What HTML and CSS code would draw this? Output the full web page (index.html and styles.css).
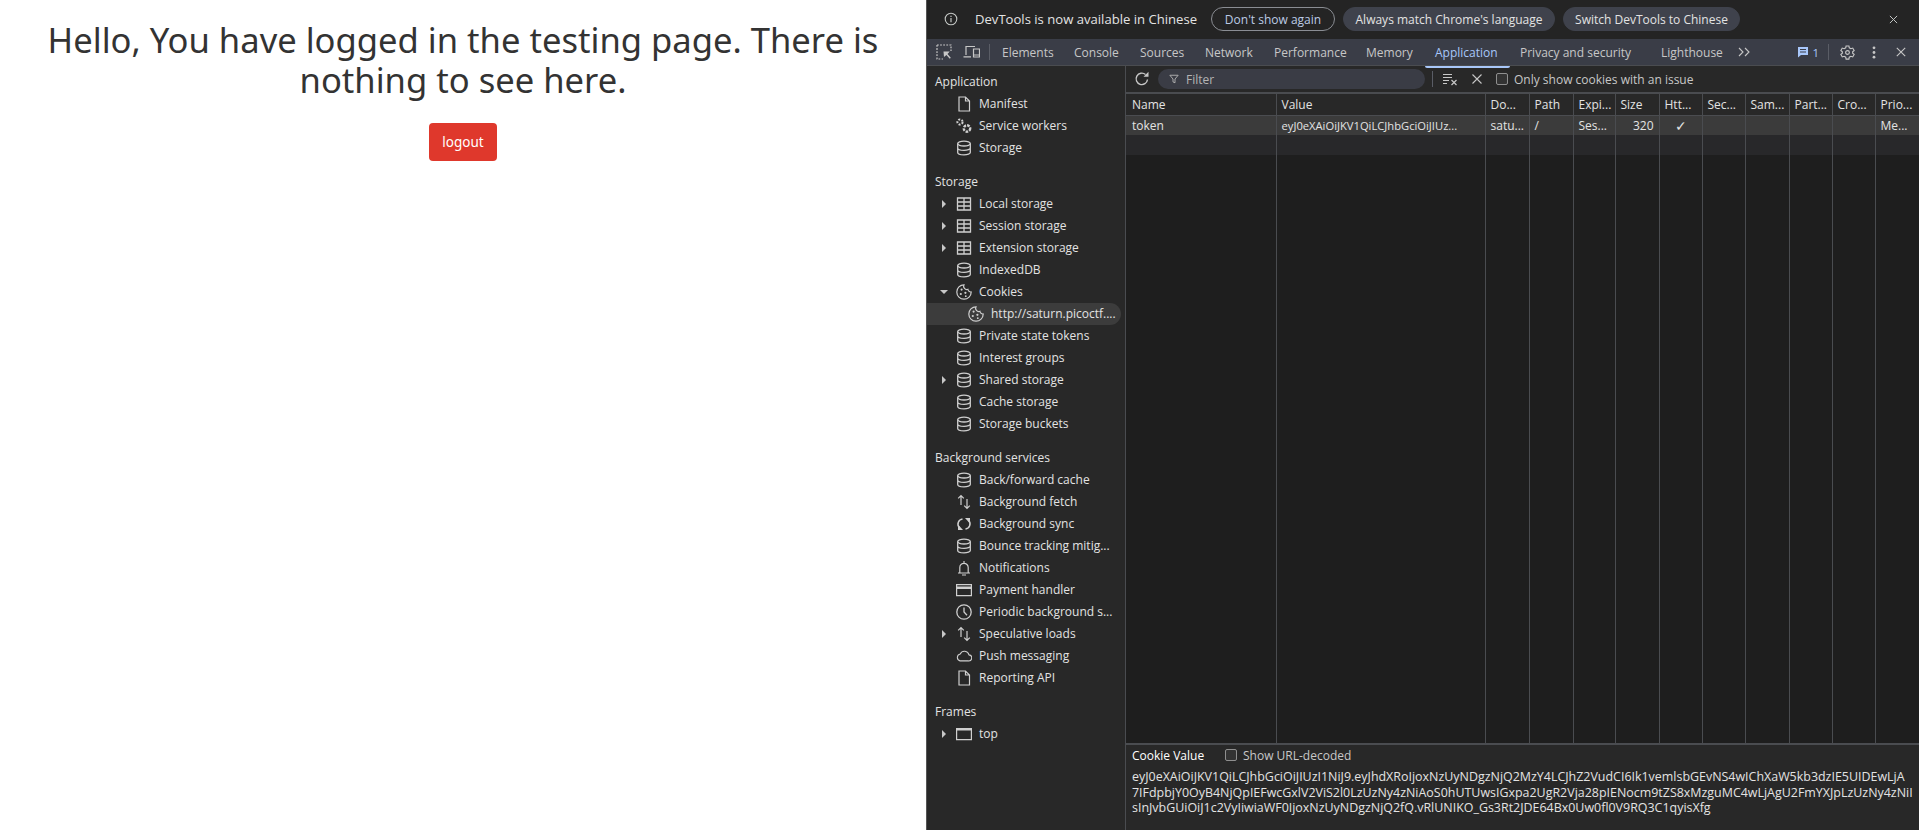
FILE: index.html
```html
<!DOCTYPE html>
<html lang="en">
<head>
    <meta charset="UTF-8">
    <meta name="viewport" content="width=device-width, initial-scale=1.0">
    <title>Testing page</title>
    <link rel="stylesheet" href="styles.css">
</head>
<body>
    <!-- icon sprite -->
    <svg class="sprite" xmlns="http://www.w3.org/2000/svg">
        <symbol id="i-file" viewBox="0 0 16 16"><path d="M3 1h6.500L13.500 5v10H3zM9.500 1v4h4" fill="none" stroke="currentColor" stroke-width="1.200"/></symbol>
        <symbol id="i-gears" viewBox="0 0 16 16"><circle cx="4" cy="4" r="2.600" fill="none" stroke="currentColor" stroke-width="2" stroke-dasharray="2 1.400"/><circle cx="11" cy="10.500" r="3.200" fill="none" stroke="currentColor" stroke-width="2.400" stroke-dasharray="2.600 1.100"/></symbol>
        <symbol id="i-db" viewBox="0 0 16 16"><g fill="none" stroke="currentColor" stroke-width="1.300"><ellipse cx="8" cy="3.600" rx="6.300" ry="2.400"/><path d="M1.700 3.600v8.800c0 1.300 2.800 2.400 6.300 2.400s6.300-1.100 6.300-2.400V3.600M1.700 8c0 1.300 2.800 2.400 6.300 2.400s6.300-1.100 6.300-2.400"/></g></symbol>
        <symbol id="i-table" viewBox="0 0 16 16"><path d="M1.500 2h13v12h-13zM1.500 6h13M1.500 10h13M8 2v12" fill="none" stroke="currentColor" stroke-width="1.300"/></symbol>
        <symbol id="i-cookie" viewBox="0 0 16 16"><path d="M8 .8a7.200 7.200 0 1 0 7.200 7.200 3 3 0 0 1-3.300-2.700A3.200 3.200 0 0 1 8 .8z" fill="none" stroke="currentColor" stroke-width="1.200"/><circle cx="5.600" cy="5.600" r="1.100" fill="currentColor"/><circle cx="4.800" cy="10" r="1.100" fill="currentColor"/><circle cx="9.400" cy="8.800" r="1.100" fill="currentColor"/><circle cx="9.800" cy="12.200" r=".9" fill="currentColor"/></symbol>
        <symbol id="i-updown" viewBox="0 0 16 16"><path d="M5 11V1.500M2.200 4.300 5 1.500l2.800 2.800M11 5v9.500M8.200 11.700l2.800 2.800 2.800-2.800" fill="none" stroke="currentColor" stroke-width="1.200"/></symbol>
        <symbol id="i-sync" viewBox="0 0 16 16"><path d="M3.200 11.500A5.200 5.200 0 0 1 6.500 3M12.800 4.500A5.200 5.200 0 0 1 9.500 13" fill="none" stroke="currentColor" stroke-width="1.500"/><path d="M2 8.500v5.500h5zM14 7.500V2H9z" fill="currentColor"/></symbol>
        <symbol id="i-bell" viewBox="0 0 16 16"><path d="M2 13h12M3.800 13V7.500a4.200 4.200 0 0 1 8.400 0V13M8 1v2.300M6 15h4" fill="none" stroke="currentColor" stroke-width="1.200"/></symbol>
        <symbol id="i-card" viewBox="0 0 16 16"><path d="M.6 2.600h14.800v11H.6z" fill="none" stroke="currentColor" stroke-width="1.200"/><path d="M.6 4.500h14.800v2.500H.6z" fill="currentColor"/></symbol>
        <symbol id="i-clock" viewBox="0 0 16 16"><circle cx="8" cy="8" r="7.200" fill="none" stroke="currentColor" stroke-width="1.300"/><path d="M8 3.500V8l3 3.200" fill="none" stroke="currentColor" stroke-width="1.300"/></symbol>
        <symbol id="i-cloud" viewBox="0 0 18 16"><path d="M4.500 13.500H14a3.400 3.400 0 0 0 .6-6.800 5.200 5.200 0 0 0-9.800-1A4 4 0 0 0 4.500 13.500z" fill="none" stroke="currentColor" stroke-width="1.200"/></symbol>
        <symbol id="i-frame" viewBox="0 0 16 16"><path d="M.6 2.600h14.800v11H.6z" fill="none" stroke="currentColor" stroke-width="1.200"/><path d="M.6 2.600h14.800v1.900H.6z" fill="currentColor"/></symbol>
    </svg>

    <div class="layout">
        <main class="page">
            <h1>Hello, You have logged in the testing page. There is nothing to see here.</h1>
            <a class="btn-logout">logout</a>
        </main>

        <section class="devtools">
            <div class="infobar">
                <svg class="info-icon" viewBox="0 0 16 16"><circle cx="8" cy="8" r="5.800" fill="none" stroke="currentColor" stroke-width="1.100"/><path d="M7.400 7h1.200v4.200H7.400zM7.400 4.700h1.200v1.200H7.400z" fill="currentColor"/></svg>
                <span class="info-text">DevTools is now available in Chinese</span>
                <button class="pill pill-outline">Don't show again</button>
                <button class="pill">Always match Chrome's language</button>
                <button class="pill">Switch DevTools to Chinese</button>
                <svg class="info-close" viewBox="0 0 10 10"><path d="M1 1l8 8M9 1L1 9" stroke="currentColor" stroke-width="1.100"/></svg>
            </div>

            <div class="tabbar">
                <svg class="tool-icon" viewBox="0 0 16 16"><path d="M1 1h14v6M1 1v14h6" fill="none" stroke="currentColor" stroke-width="1.200" stroke-dasharray="1.800 1.300"/><path d="M7.500 7.500h6.200L11.500 10l3.300 3.800-1 1-3.400-3.700-2.400 2z" fill="currentColor"/></svg>
                <svg class="tool-icon device" viewBox="0 0 17 16"><path d="M3 11V2.500h9M.5 12.800h7.500M10.500 5h6v8h-6zM10.500 11h6" fill="none" stroke="currentColor" stroke-width="1.200"/></svg>
                <span class="tool-sep"></span>
                <nav class="tabs">
                    <span class="tab">Elements</span>
                    <span class="tab">Console</span>
                    <span class="tab">Sources</span>
                    <span class="tab">Network</span>
                    <span class="tab">Performance</span>
                    <span class="tab">Memory</span>
                    <span class="tab tab-active">Application</span>
                    <span class="tab">Privacy and security</span>
                    <span class="tab">Lighthouse</span>
                </nav>
                <svg class="more-icon" viewBox="0 0 12 10"><path d="M1 1l4 4-4 4M7 1l4 4-4 4" fill="none" stroke="currentColor" stroke-width="1.100"/></svg>
                <div class="tab-actions">
                    <span class="msg-count">
                        <svg viewBox="0 0 12 12"><path d="M1 1h10v8H4l-3 2.500z" fill="currentColor"/><path d="M3 3.500h6M3 6h6" stroke="#3a3d48" stroke-width="1"/></svg>
                        1
                    </span>
                    <span class="tool-sep"></span>
                    <svg class="action-icon" viewBox="0 0 16 16"><path d="M6.500 1h3l.4 2 1.700 1 2-.7 1.500 2.600-1.600 1.300v1.600l1.600 1.300-1.500 2.600-2-.7-1.700 1-.4 2h-3l-.4-2-1.700-1-2 .7L.9 10.100l1.600-1.300V7.200L.9 5.900l1.500-2.600 2 .7 1.700-1z" fill="none" stroke="currentColor" stroke-width="1.200"/><circle cx="8" cy="8" r="2" fill="none" stroke="currentColor" stroke-width="1.200"/></svg>
                    <svg class="action-icon dots" viewBox="0 0 4 14"><circle cx="2" cy="2" r="1.500" fill="currentColor"/><circle cx="2" cy="7" r="1.500" fill="currentColor"/><circle cx="2" cy="12" r="1.500" fill="currentColor"/></svg>
                    <svg class="action-icon cross" viewBox="0 0 10 10"><path d="M.8.8l8.400 8.400M9.200.8L.8 9.200" stroke="currentColor" stroke-width="1.100"/></svg>
                </div>
            </div>

            <div class="panel">
                <aside class="sidebar">
                    <div class="side-head">Application</div>
                    <div class="side-row"><svg class="side-icon"><use href="#i-file"/></svg>Manifest</div>
                    <div class="side-row"><svg class="side-icon"><use href="#i-gears"/></svg>Service workers</div>
                    <div class="side-row"><svg class="side-icon"><use href="#i-db"/></svg>Storage</div>

                    <div class="side-head side-gap">Storage</div>
                    <div class="side-row arrow"><svg class="side-icon"><use href="#i-table"/></svg>Local storage</div>
                    <div class="side-row arrow"><svg class="side-icon"><use href="#i-table"/></svg>Session storage</div>
                    <div class="side-row arrow"><svg class="side-icon"><use href="#i-table"/></svg>Extension storage</div>
                    <div class="side-row"><svg class="side-icon"><use href="#i-db"/></svg>IndexedDB</div>
                    <div class="side-row arrow open"><svg class="side-icon"><use href="#i-cookie"/></svg>Cookies</div>
                    <div class="side-row side-child"><svg class="side-icon"><use href="#i-cookie"/></svg>http://saturn.picoctf....</div>
                    <div class="side-row"><svg class="side-icon"><use href="#i-db"/></svg>Private state tokens</div>
                    <div class="side-row"><svg class="side-icon"><use href="#i-db"/></svg>Interest groups</div>
                    <div class="side-row arrow"><svg class="side-icon"><use href="#i-db"/></svg>Shared storage</div>
                    <div class="side-row"><svg class="side-icon"><use href="#i-db"/></svg>Cache storage</div>
                    <div class="side-row"><svg class="side-icon"><use href="#i-db"/></svg>Storage buckets</div>

                    <div class="side-head side-gap">Background services</div>
                    <div class="side-row"><svg class="side-icon"><use href="#i-db"/></svg>Back/forward cache</div>
                    <div class="side-row"><svg class="side-icon"><use href="#i-updown"/></svg>Background fetch</div>
                    <div class="side-row"><svg class="side-icon"><use href="#i-sync"/></svg>Background sync</div>
                    <div class="side-row"><svg class="side-icon"><use href="#i-db"/></svg>Bounce tracking mitig...</div>
                    <div class="side-row"><svg class="side-icon"><use href="#i-bell"/></svg>Notifications</div>
                    <div class="side-row"><svg class="side-icon"><use href="#i-card"/></svg>Payment handler</div>
                    <div class="side-row"><svg class="side-icon"><use href="#i-clock"/></svg>Periodic background s...</div>
                    <div class="side-row arrow"><svg class="side-icon"><use href="#i-updown"/></svg>Speculative loads</div>
                    <div class="side-row"><svg class="side-icon"><use href="#i-cloud"/></svg>Push messaging</div>
                    <div class="side-row"><svg class="side-icon"><use href="#i-file"/></svg>Reporting API</div>

                    <div class="side-head side-gap">Frames</div>
                    <div class="side-row arrow"><svg class="side-icon"><use href="#i-frame"/></svg>top</div>
                </aside>

                <div class="content">
                    <div class="filterbar">
                        <svg class="refresh" viewBox="0 0 16 16"><path d="M13.500 8.500A5.700 5.700 0 1 1 11.500 3.500" fill="none" stroke="currentColor" stroke-width="1.400"/><path d="M9.500 5.800h5v-5z" fill="currentColor"/></svg>
                        <div class="filter-input">
                            <svg viewBox="0 0 12 12"><path d="M1 1.500h10L7.200 6v4.500L4.800 9.500V6z" fill="none" stroke="currentColor" stroke-width="1.100"/></svg>
                            Filter
                        </div>
                        <span class="tool-sep"></span>
                        <svg class="clear-all" viewBox="0 0 15 13"><path d="M0 1.500h9M0 4.500h9M0 7.500h6M0 10.500h4" stroke="currentColor" stroke-width="1.200"/><path d="M8.500 7l5 5M13.500 7l-5 5" stroke="currentColor" stroke-width="1.200"/></svg>
                        <svg class="clear-one" viewBox="0 0 10 10"><path d="M.5.5l9 9M9.500.5l-9 9" stroke="currentColor" stroke-width="1.100"/></svg>
                        <span class="check"></span>
                        <span class="filter-label">Only show cookies with an issue</span>
                    </div>

                    <div class="table-wrap">
                        <table class="cookies">
                            <colgroup>
                                <col class="col-name"><col class="col-value"><col class="col-domain"><col class="col-path">
                                <col class="col-exp"><col class="col-size"><col class="col-http"><col class="col-sec">
                                <col class="col-same"><col class="col-part"><col class="col-cross"><col class="col-prio">
                            </colgroup>
                            <thead>
                                <tr>
                                    <th>Name</th><th>Value</th><th>Do...</th><th>Path</th><th>Expi...</th><th>Size</th>
                                    <th>Htt...</th><th>Sec...</th><th>Sam...</th><th>Part...</th><th>Cro...</th><th>Prio...</th>
                                </tr>
                            </thead>
                            <tbody>
                                <tr class="row-selected">
                                    <td>token</td><td class="long">eyJ0eXAiOiJKV1QiLCJhbGciOiJIUz...</td><td>satu...</td><td>/</td><td>Ses...</td>
                                    <td class="num">320</td><td class="mid">✓</td><td></td><td></td><td></td><td></td><td>Me...</td>
                                </tr>
                                <tr class="row-odd">
                                    <td></td><td></td><td></td><td></td><td></td><td></td><td></td><td></td><td></td><td></td><td></td><td></td>
                                </tr>
                                <tr class="row-fill">
                                    <td></td><td></td><td></td><td></td><td></td><td></td><td></td><td></td><td></td><td></td><td></td><td></td>
                                </tr>
                            </tbody>
                        </table>
                    </div>

                    <div class="value-pane">
                        <div class="value-head">
                            <strong>Cookie Value</strong>
                            <span class="check"></span>
                            <span class="value-label">Show URL-decoded</span>
                        </div>
                        <p class="value-text">eyJ0eXAiOiJKV1QiLCJhbGciOiJIUzI1NiJ9.eyJhdXRoIjoxNzUyNDgzNjQ2MzY4LCJhZ2VudCI6Ik1vemlsbGEvNS4wIChXaW5kb3dzIE5UIDEwLjA<br>7IFdpbjY0OyB4NjQpIEFwcGxlV2ViS2l0LzUzNy4zNiAoS0hUTUwsIGxpa2UgR2Vja28pIENocm9tZS8xMzguMC4wLjAgU2FmYXJpLzUzNy4zNiI<br>sInJvbGUiOiJ1c2VyIiwiaWF0IjoxNzUyNDgzNjQ2fQ.vRlUNIKO_Gs3Rt2JDE64Bx0Uw0fl0V9RQ3C1qyisXfg</p>
                    </div>
                </div>
            </div>
        </section>
    </div>
</body>
</html>
```

FILE: styles.css
```css
:root {
    --dt-bg: #282828;
    --dt-bar: #3a3d47;
    --dt-text: #e3e3e3;
    --dt-muted: #c7c7c7;
    --dt-line: #4a4c50;
    --dt-pill: #3f424c;
}

* {
    box-sizing: border-box;
    margin: 0;
    padding: 0;
}

html, body {
    height: 100%;
    overflow: hidden;
}

.sprite {
    display: none;
}

.layout {
    display: flex;
    height: 100%;
}

/* left: the page itself */
.page {
    width: 926px;
    flex: none;
    background-color: #fff;
    color: #333;
    text-align: center;
    font-family: "Noto Sans", sans-serif;
}

.page h1 {
    font-size: 34.600px;
    font-weight: 400;
    line-height: 39.600px;
    padding: 0 40px;
    margin: 20px 0 24px;
}

.btn-logout {
    display: inline-block;
    width: 68px;
    height: 38px;
    line-height: 38px;
    background-color: #df382c;
    color: #fff;
    border-radius: 4px;
    font-size: 13.500px;
}

/* right: devtools */
.devtools {
    flex: 1;
    min-width: 0;
    display: flex;
    flex-direction: column;
    background-color: var(--dt-bg);
    color: var(--dt-text);
    border-left: 1px solid #555;
    font-family: "Open Sans", sans-serif;
    font-size: 12px;
}

.infobar {
    height: 39px;
    flex: none;
    display: flex;
    align-items: center;
    padding-left: 16px;
    padding-bottom: 1px;
    background-color: #242424;
}

.info-icon {
    width: 16px;
    height: 16px;
    color: #c4c7c5;
}

.info-text {
    margin-left: 16px;
    width: 236px;
    font-size: 13.100px;
    white-space: nowrap;
}

.pill {
    height: 24px;
    padding: 0;
    margin-right: 8px;
    border: 1px solid var(--dt-pill);
    border-radius: 12px;
    background-color: var(--dt-pill);
    color: #e3e3e3;
    font: inherit;
    white-space: nowrap;
}

.pill:nth-of-type(1) { width: 124px; }
.pill:nth-of-type(2) { width: 212px; }
.pill:nth-of-type(3) { width: 177px; }

.pill-outline {
    background-color: transparent;
    border-color: #8a8d93;
    color: #bccbe4;
}

.info-close {
    width: 9px;
    height: 9px;
    margin-left: auto;
    margin-right: 21px;
    color: #c4c7c5;
}

.tabbar {
    height: 27px;
    flex: none;
    display: flex;
    align-items: center;
    background-color: var(--dt-bar);
    border-bottom: 1px solid var(--dt-line);
    color: #c7c7c7;
}

.tool-icon {
    width: 16px;
    height: 16px;
    margin-left: 9px;
}

.tool-icon.device {
    margin-left: 11px;
    width: 17px;
}

.tool-sep {
    width: 1px;
    height: 16px;
    margin-left: 9px;
    background-color: #5a5d66;
    flex: none;
}

.tabs {
    display: grid;
    grid-template-columns: 72px 66px 65px 69px 92px 69px 85px 141px 83px;
    margin-left: 2px;
    height: 100%;
}

.tab {
    padding-left: 10px;
    line-height: 27px;
    white-space: nowrap;
}

.tab-active {
    color: #a8c7fa;
    border-bottom: 2px solid #a8c7fa;
    border-radius: 0 0 2px 2px;
}

.more-icon {
    width: 12px;
    height: 10px;
    margin-left: 4px;
}

.tab-actions {
    margin-left: auto;
    display: flex;
    align-items: center;
    height: 100%;
}

.msg-count {
    display: flex;
    align-items: center;
    gap: 3px;
    color: #a8c7fa;
    font-size: 11.500px;
}

.msg-count svg {
    width: 12px;
    height: 12px;
}

.action-icon {
    width: 15px;
    height: 15px;
    margin-left: 11px;
    color: #c7c7c7;
}

.action-icon.dots {
    width: 4px;
    height: 13px;
    margin-left: 17px;
}

.action-icon.cross {
    width: 10px;
    height: 10px;
    margin-left: 20px;
    margin-right: 13px;
}

.panel {
    flex: 1;
    min-height: 0;
    display: flex;
}

.sidebar {
    width: 199px;
    flex: none;
    padding-top: 5px;
    border-right: 1px solid var(--dt-line);
}

.side-head {
    height: 22px;
    line-height: 22px;
    padding-left: 8px;
    color: var(--dt-text);
}

.side-gap {
    margin-top: 12px;
}

.side-row {
    position: relative;
    display: flex;
    align-items: center;
    height: 22px;
    padding-left: 29px;
    padding-bottom: 1px;
    white-space: nowrap;
    color: var(--dt-text);
}

.side-icon {
    width: 16px;
    height: 16px;
    margin-right: 7px;
    color: #cfcfcf;
    flex: none;
}

/* expand triangle */
.arrow::before {
    content: "";
    position: absolute;
    left: 15px;
    top: 7px;
    border-left: 4px solid #c7c7c7;
    border-top: 4px solid transparent;
    border-bottom: 4px solid transparent;
}

.arrow.open::before {
    left: 13px;
    top: 9px;
    border-top: 4px solid #c7c7c7;
    border-left: 4px solid transparent;
    border-right: 4px solid transparent;
    border-bottom: none;
}

.side-child {
    padding-left: 41px;
    margin-right: 4px;
    background-color: #3c3c3c;
    border-radius: 0 11px 11px 0;
}

.content {
    flex: 1;
    min-width: 0;
    display: flex;
    flex-direction: column;
}

.filterbar {
    height: 26px;
    flex: none;
    display: flex;
    align-items: center;
    color: #c7c7c7;
}

.refresh {
    width: 16px;
    height: 16px;
    margin-left: 8px;
}

.filter-input {
    display: flex;
    align-items: center;
    width: 267px;
    height: 20px;
    margin-left: 8px;
    padding-left: 11px;
    gap: 7px;
    background-color: #3a3c45;
    border-radius: 10px;
    color: #b4b4b4;
}

.filter-input svg {
    width: 10px;
    height: 10px;
}

.filterbar .tool-sep {
    margin-left: 7px;
}

.clear-all {
    width: 15px;
    height: 13px;
    margin-left: 10px;
}

.clear-one {
    width: 10px;
    height: 10px;
    margin-left: 14px;
}

.check {
    display: inline-block;
    width: 12px;
    height: 12px;
    border: 1px solid #8f8f8f;
    border-radius: 2px;
    background-color: #333;
    flex: none;
}

.filterbar .check {
    margin-left: 14px;
}

.filter-label {
    margin-left: 6px;
}

.table-wrap {
    flex: 1;
    min-height: 0;
    border-top: 2px solid var(--dt-line);
    background-color: #1e1e1e;
}

.cookies {
    width: 100%;
    height: 100%;
    table-layout: fixed;
    border-collapse: collapse;
    color: var(--dt-text);
}

.col-name { width: 150px; }
.col-value { width: 209px; }
.col-domain { width: 44px; }
.col-path { width: 44px; }
.col-exp { width: 42px; }
.col-size { width: 44px; }
.col-http { width: 43px; }
.col-sec { width: 43px; }
.col-same { width: 44px; }
.col-part { width: 43px; }
.col-cross { width: 43px; }
.col-prio { width: 44px; }

.cookies th,
.cookies td {
    padding: 0 5px;
    border-left: 1px solid var(--dt-line);
    font-weight: 400;
    text-align: left;
    white-space: nowrap;
    overflow: hidden;
}

.cookies th:first-child,
.cookies td:first-child {
    border-left: none;
    padding-left: 6px;
}

.cookies th {
    height: 21px;
    background-color: #282828;
    border-bottom: 1px solid var(--dt-line);
}

.row-selected td {
    height: 20px;
    background-color: #3b3b3b;
}

.row-odd td {
    height: 20px;
    background-color: #28282a;
}

.cookies .long {
    font-size: 11.200px;
}

.cookies .num {
    text-align: right;
}

.cookies .mid {
    text-align: center;
    font-size: 14px;
}

.value-pane {
    height: 87px;
    flex: none;
    padding: 1px 6px 0;
    border-top: 2px solid var(--dt-line);
}

.value-head {
    display: flex;
    align-items: center;
    height: 18px;
}

.value-head strong {
    font-weight: 500;
    color: #fff;
    width: 93px;
    white-space: nowrap;
}

.value-label {
    margin-left: 6px;
    color: var(--dt-muted);
}

.value-text {
    margin-top: 5px;
    font-size: 12.450px;
    line-height: 15.500px;
    white-space: nowrap;
}
```
